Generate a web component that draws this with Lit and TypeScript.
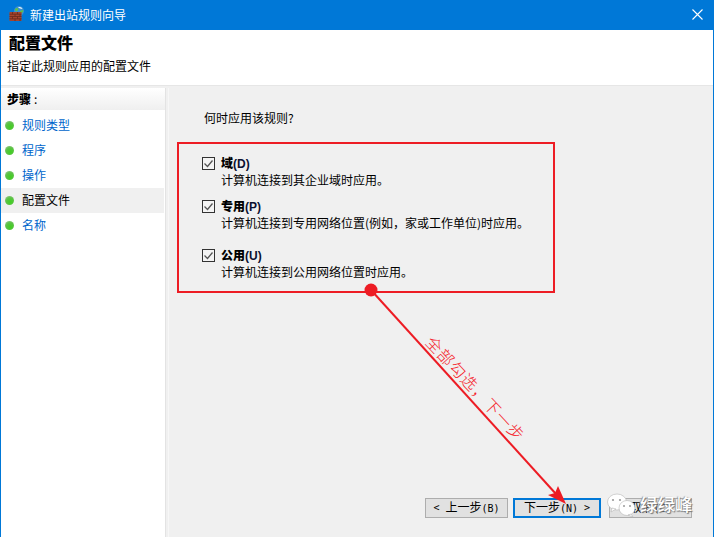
import { LitElement, html, css, svg } from "lit";
import { customElement } from "lit/decorators.js";

@customElement("app-root")
export class AppRoot extends LitElement {
  static styles = css`
    :host { display: block; width: 714px; height: 537px; position: relative; overflow: hidden;
      font-family: "Noto Sans CJK SC", "Noto Sans CJK JP", sans-serif; font-size: 12px; color: #000; }
    .win { width: 714px; height: 537px; box-sizing: border-box; border-left: 1px solid #0078d7; border-right: 1px solid #0078d7;
      display: flex; flex-direction: column; background: #f0f0f0; }
    .title { height: 30px; flex: none; background: #0078d7; color: #fff; display: flex; align-items: center; padding-left: 8px; gap: 5px; line-height: 30px; }
    .title .t { flex: 1; }
    .ico { margin-top: -2px; display: block; }
    .close { width: 11px; height: 11px; margin: -1px 10px 0 0; display: block; }
    .head { height: 55px; flex: none; background: #fff; border-bottom: 1px solid #e6e6e6; box-sizing: content-box; padding-left: 6px; }
    .head h1 { margin: 0; padding: 1px 0 0 2px; font-size: 16px; line-height: 22px; font-weight: 900; }
    .head p { margin: 0; padding-top: 4px; font-size: 12px; line-height: 18px; }
    .main { flex: 1; display: flex; background: #f0f0f0; padding-top: 2px; min-height: 0; }
    .left { width: 164px; flex: none; background: #fff; border-right: 1px solid #e3e3e3; }
    .steps { height: 22px; line-height: 22px; padding-left: 6px; font-weight: 900; background: linear-gradient(#fff, #efefef); }
    .steps span { font-weight: 400; margin-left: 3px; }
    ul { list-style: none; margin: 3px 0 0; padding: 0; }
    li { height: 25px; display: flex; align-items: center; color: #0066cc; padding-left: 4px; gap: 8px; }
    li .txt { margin-top: -2px; }
    li.on { color: #000; background: #f0f0f0; width: 163px; box-sizing: border-box; }
    .dot { width: 9px; height: 9px; border-radius: 50%; background: radial-gradient(circle at 60% 65%, #3fd01f 0%, #5cc245 50%, #a9c9a3 100%); flex: none; }
    .right { flex: 1; margin-left: 2px; background: #f0f0f0; padding: 21px 0 19px 35px; display: flex; flex-direction: column; border-left: 1px solid #f7f7f7; min-width: 0; }
    .q { line-height: 17px; height: 17px; }
    .opts { margin: 29px 0 0 -2px; display: flex; flex-direction: column; }
    .opt { display: grid; grid-template-columns: 13px auto; column-gap: 6px; align-items: start; }
    .opt + .opt { margin-top: 9px; }
    .opt.last { margin-top: 15px; }
    .box { width: 13px; height: 13px; margin-top: 2px; display: block; }
    .lab { font-weight: 900; line-height: 18px; height: 17px; margin-top: -1px; }
    .lab b { color: #0a1030; font-weight: 700; font-family: "Liberation Sans", sans-serif; }
    .desc { grid-column: 2; line-height: 18px; height: 18px; }
    .btns { margin: auto 0 0 221px; display: flex; gap: 5px; }
    .btn { height: 20px; box-sizing: border-box; border: 1px solid #adadad; background: #e1e1e1; display: flex; align-items: center; justify-content: center; gap: 6px; line-height: 18px; font-size: 12px; }
    .btn i { font-style: normal; font-family: "DejaVu Sans Mono", monospace; font-size: 10px; }
    .b1 { width: 83px; }
    .b2 { width: 88px; border: 2px solid #0078d7; }
    .b3 { width: 83px; margin-left: 3px; }
    .red { position: absolute; left: 177px; top: 142px; width: 378px; height: 151px; box-sizing: border-box; border: 2px solid #ed1c24; }
    .overlay { position: absolute; left: 0; top: 0; display: block; }
    .note { position: absolute; left: 476px; top: 388px; transform: translate(-50%, -50%) rotate(47deg); color: #f5222a; font-size: 16px; line-height: 20px; white-space: nowrap; letter-spacing: 1px; font-weight: 300; }
    .wm { position: absolute; left: 640px; top: 492px; color: #fff; font-size: 17.5px; line-height: 24px; font-weight: 500; text-shadow: 1px 1px 1px #777, -1px 0 1px #999; }
  `;

  private item(t: string, on = false) {
    return html`<li class=${on ? "on" : ""}><span class="dot"></span><span class="txt">${t}</span></li>`;
  }
  private check() {
    return html`<svg class="box" viewBox="0 0 13 13"><rect x=".5" y=".5" width="12" height="12" fill="#f4f4f4" stroke="#333"/><path d="M2.5 6.5l3 3 5-6" fill="none" stroke="#555" stroke-width="1.3"/></svg>`;
  }
  private opt(t: string, k: string, d: string, cls = "") {
    return html`<div class="opt ${cls}">${this.check()}<div class="lab">${t}<b>(${k})</b></div><div class="desc">${d}</div></div>`;
  }

  render() {
    return html`
      <div class="win">
        <div class="title">
          <svg class="ico" width="16" height="16" viewBox="0 0 16 16">
            <circle cx="10" cy="5" r="5" fill="#3a8fd0"/>
            <path d="M6 3c2-2 4-1 3 1s-3 2-3-1zM11 5c1-1 3-1 3.500-.5-.5 2-2 3-3 3z" fill="#5fc04a"/>
            <path d="M9 1.500c2-1 4 0 4.500 1.500-2 0-3-1-4.500-1.500z" fill="#e4f4ff"/>
            <rect x=".5" y="6" width="12" height="9" fill="#a5452e"/>
            <path d="M.5 8.200h12M.5 10.500h12M.5 12.800h12M3.500 6v2.200M8.500 6v2.200M6 8.200v2.300M11 8.200v2.300M3.500 10.500v2.300M8.500 10.500v2.300M6 12.800V15M11 12.800V15" stroke="#6a2a1c" stroke-width=".8"/>
          </svg>
          <span class="t">新建出站规则向导</span>
          <svg class="close" viewBox="0 0 11 11"><path d="M.5.5l10 10M10.500.5l-10 10" stroke="#fff" stroke-width="1.100"/></svg>
        </div>
        <div class="head">
          <h1>配置文件</h1>
          <p>指定此规则应用的配置文件</p>
        </div>
        <div class="main">
          <div class="left">
            <div class="steps">步骤<span>:</span></div>
            <ul>
              ${this.item("规则类型")}
              ${this.item("程序")}
              ${this.item("操作")}
              ${this.item("配置文件", true)}
              ${this.item("名称")}
            </ul>
          </div>
          <div class="right">
            <div class="q">何时应用该规则?</div>
            <div class="opts">
              ${this.opt("域", "D", "计算机连接到其企业域时应用。")}
              ${this.opt("专用", "P", "计算机连接到专用网络位置(例如，家或工作单位)时应用。")}
              ${this.opt("公用", "U", "计算机连接到公用网络位置时应用。", "last")}
            </div>
            <div class="btns">
              <div class="btn b1"><i>&lt;</i><span>上一步<i>(B)</i></span></div>
              <div class="btn b2"><span>下一步<i>(N)</i></span><i>&gt;</i></div>
              <div class="btn b3"><span>取消<i>(C)</i></span></div>
            </div>
          </div>
        </div>
      </div>
      <div class="red"></div>
      <svg class="overlay" width="714" height="537" viewBox="0 0 714 537">
        ${svg`<line x1="371" y1="290" x2="556" y2="494" stroke="#ed1c24" stroke-width="2"/>
        <circle cx="371" cy="290" r="6.500" fill="#ed1c24"/>
        <path d="M566 504L548 495 555 493 558 486z" fill="#ed1c24"/>
        <g fill="#fff" stroke="#b5b5b5" stroke-width=".6">
          <ellipse cx="617" cy="502" rx="9.500" ry="8"/>
          <path d="M612 508l-1 4 5-3z"/>
          <ellipse cx="627" cy="508" rx="8" ry="7.500"/>
          <path d="M631 514l2 3-5-2z"/>
        </g>
        <g fill="#9a9a9a"><circle cx="613" cy="500" r="1.100"/><circle cx="620" cy="500" r="1.100"/><circle cx="624" cy="506" r="1"/><circle cx="630" cy="506" r="1"/></g>`}
      </svg>
      <div class="note">全部勾选，下一步</div>
      <div class="wm">绿绿峰</div>
    `;
  }
}
